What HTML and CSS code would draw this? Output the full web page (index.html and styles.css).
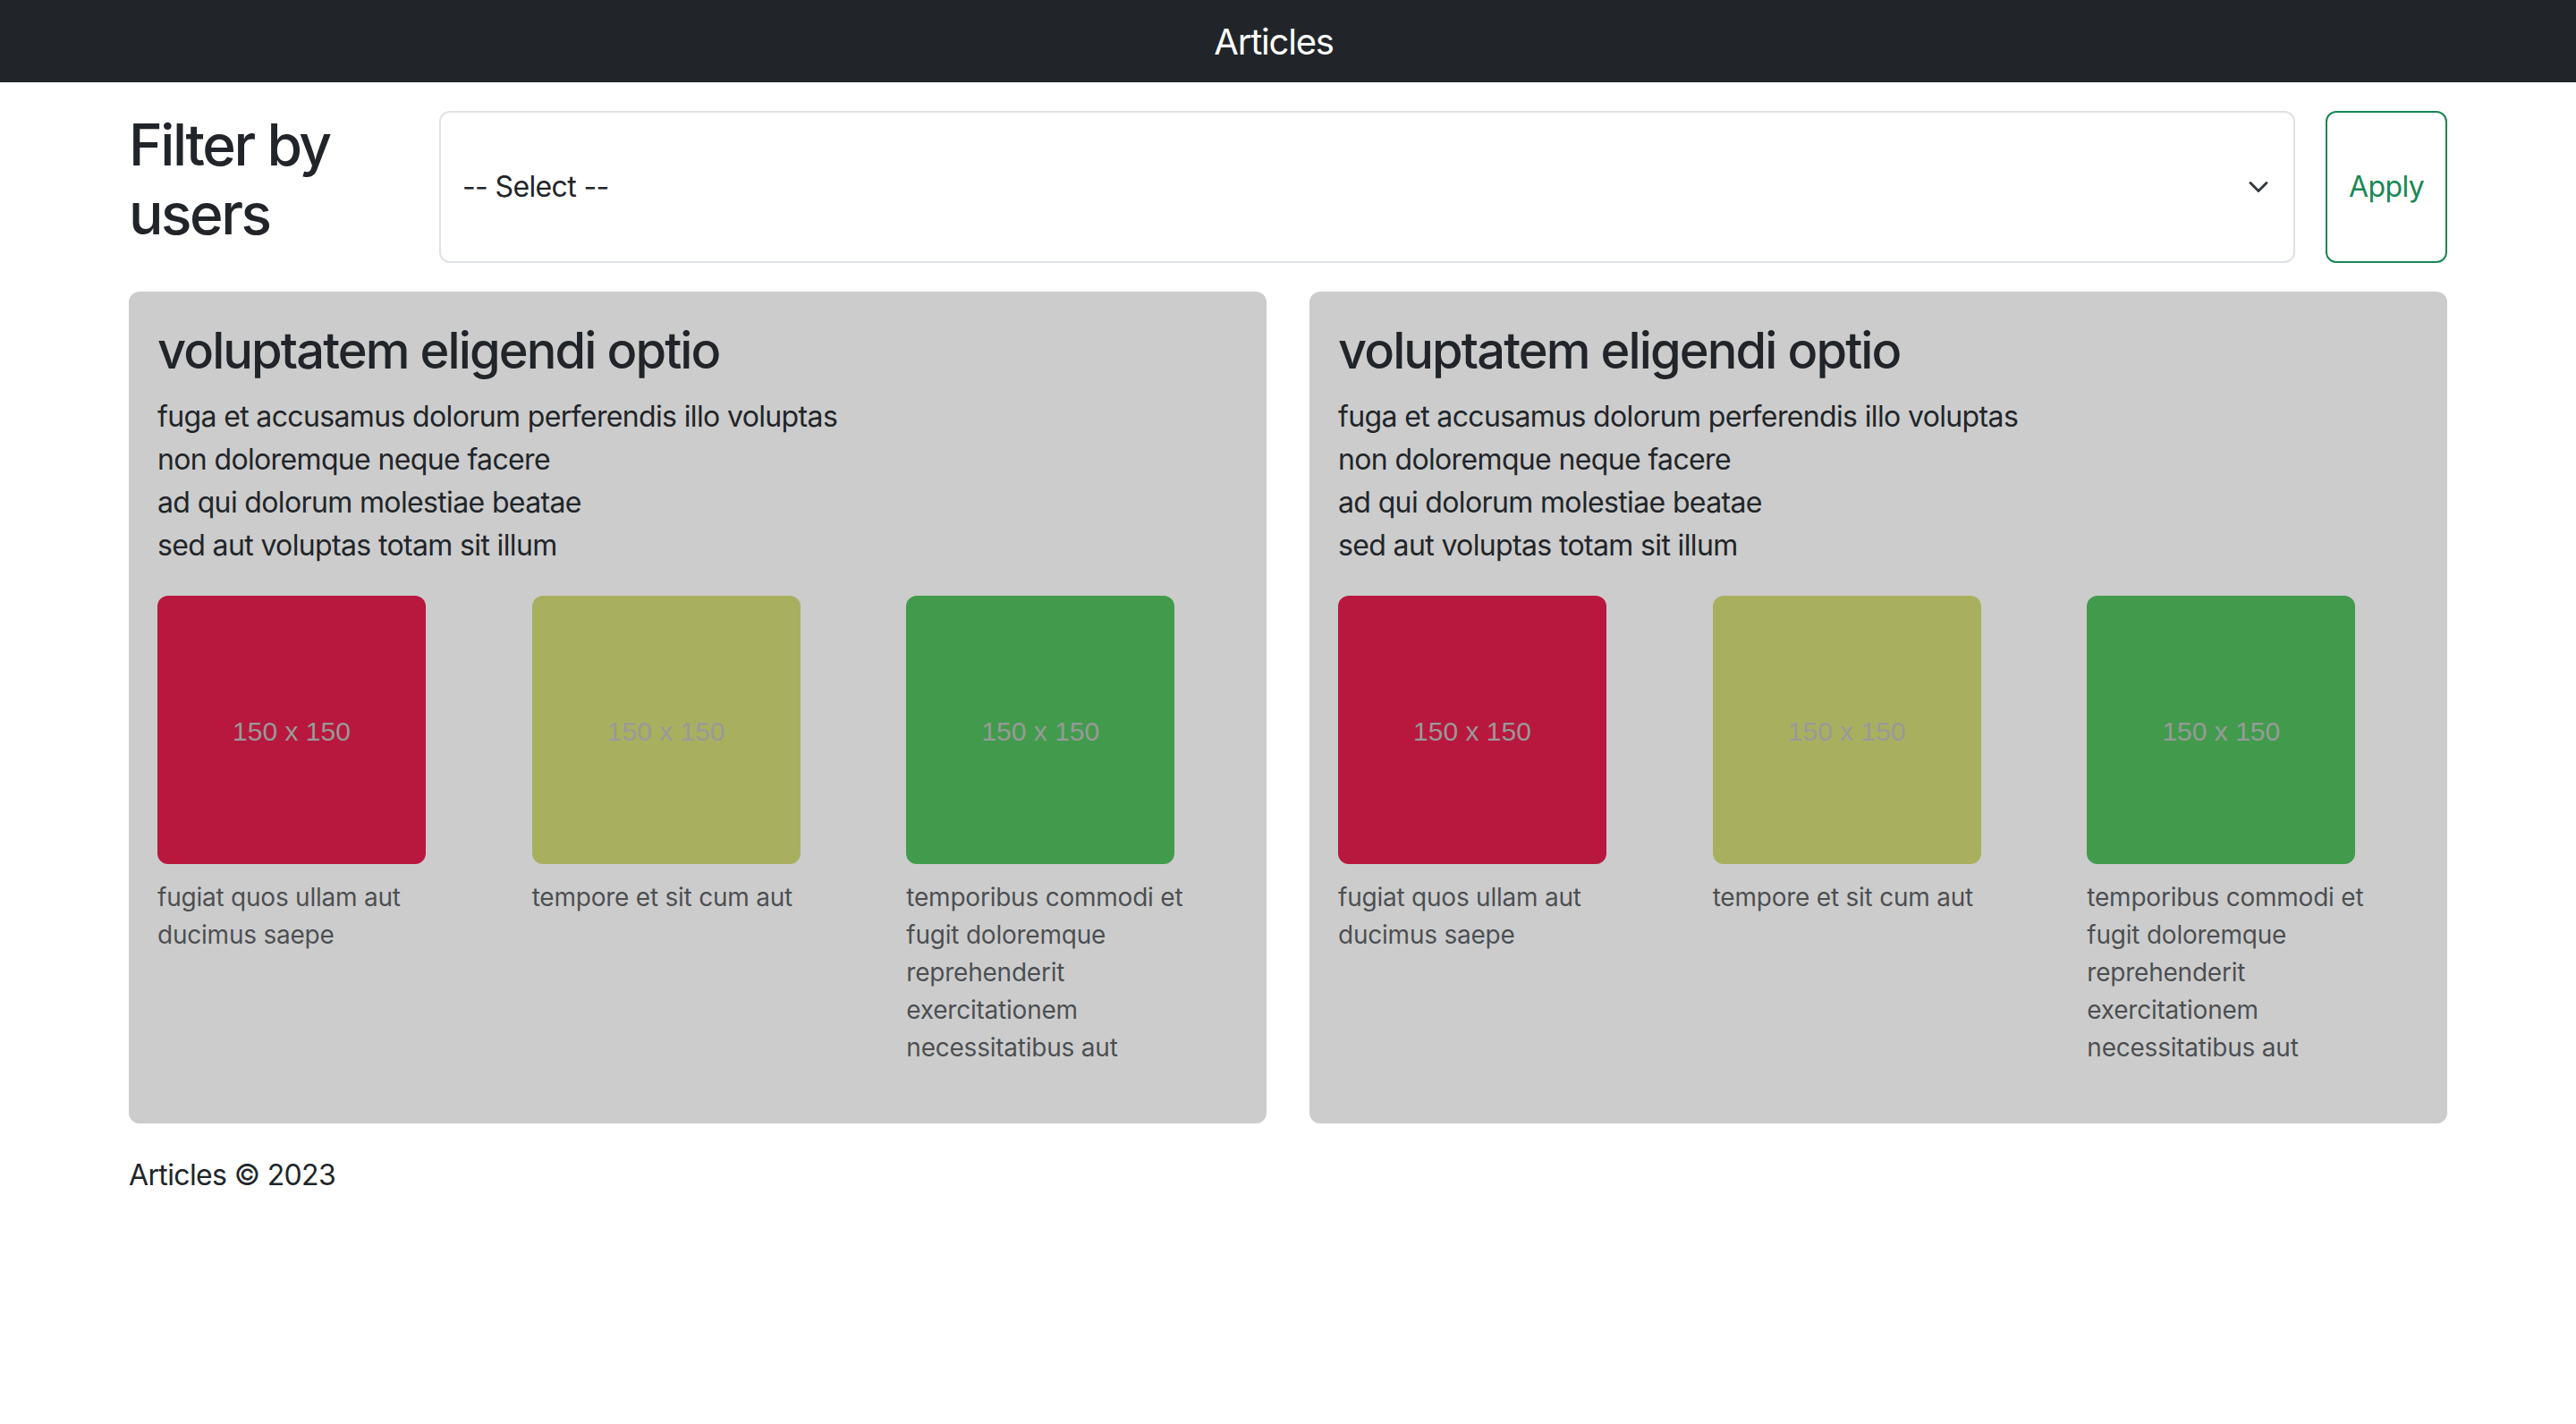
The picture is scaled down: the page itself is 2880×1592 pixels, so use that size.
FILE: index.html
```html
<!DOCTYPE html>
<html lang="en">
<head>
<meta charset="utf-8">
<title>Articles</title>
<link rel="stylesheet" href="styles.css">
</head>
<body>
<header class="navbar">
  <span class="brand">Articles</span>
</header>
<main class="container">
  <form class="filter">
    <h2 class="filter-title">Filter by users</h2>
    <div class="select-box">
      <span class="select-text">-- Select --</span>
      <svg class="chevron" viewBox="0 0 16 16" width="24" height="24" aria-hidden="true"><path d="m2 5 6 6 6-6" fill="none" stroke="#343a40" stroke-width="2" stroke-linecap="round" stroke-linejoin="round"/></svg>
    </div>
    <button type="button" class="apply">Apply</button>
  </form>

  <div class="cards">
    <article class="card">
      <h3 class="card-title">voluptatem eligendi optio</h3>
      <p class="card-body">fuga et accusamus dolorum perferendis illo voluptas
non doloremque neque facere
ad qui dolorum molestiae beatae
sed aut voluptas totam sit illum</p>
      <div class="photos">
        <figure class="photo">
          <div class="thumb thumb-red">150 x 150</div>
          <figcaption class="caption">fugiat quos ullam aut ducimus saepe</figcaption>
        </figure>
        <figure class="photo">
          <div class="thumb thumb-olive">150 x 150</div>
          <figcaption class="caption">tempore et sit cum aut</figcaption>
        </figure>
        <figure class="photo">
          <div class="thumb thumb-green">150 x 150</div>
          <figcaption class="caption">temporibus commodi et fugit doloremque reprehenderit exercitationem necessitatibus aut</figcaption>
        </figure>
      </div>
    </article>
    <article class="card">
      <h3 class="card-title">voluptatem eligendi optio</h3>
      <p class="card-body">fuga et accusamus dolorum perferendis illo voluptas
non doloremque neque facere
ad qui dolorum molestiae beatae
sed aut voluptas totam sit illum</p>
      <div class="photos">
        <figure class="photo">
          <div class="thumb thumb-red">150 x 150</div>
          <figcaption class="caption">fugiat quos ullam aut ducimus saepe</figcaption>
        </figure>
        <figure class="photo">
          <div class="thumb thumb-olive">150 x 150</div>
          <figcaption class="caption">tempore et sit cum aut</figcaption>
        </figure>
        <figure class="photo">
          <div class="thumb thumb-green">150 x 150</div>
          <figcaption class="caption">temporibus commodi et fugit doloremque reprehenderit exercitationem necessitatibus aut</figcaption>
        </figure>
      </div>
    </article>
  </div>

  <footer class="footer">Articles © 2023</footer>
</main>
</body>
</html>
```

FILE: styles.css
```css
* { box-sizing: border-box; }

body {
  margin: 0;
  background: #fff;
  color: #212529;
  font-family: Inter, "Noto Sans", "Liberation Sans", sans-serif;
  font-size: 32px;
  line-height: 1.5;
  letter-spacing: -0.02em;
}

.navbar {
  height: 92px;
  background: #212529;
  display: flex;
  align-items: center;
  justify-content: center;
}

.brand {
  color: #fff;
  font-size: 40px;
  line-height: 60px;
  letter-spacing: -0.03em;
  padding-top: 2px;
  margin-right: 32px;
}

.container {
  width: 2592px;
  margin: 0 auto;
  padding-top: 32px;
}

.filter {
  display: grid;
  grid-template-columns: 323px 1fr auto;
  column-gap: 24px;
  margin: 0;
}

.filter-title {
  margin: 0 0 16px;
  font-size: 64px;
  font-weight: 500;
  line-height: 1.2;
  letter-spacing: -0.038em;
}

.select-box {
  display: flex;
  align-items: center;
  justify-content: space-between;
  border: 2px solid #dee2e6;
  border-radius: 12px;
  padding: 0 27px 0 24px;
  background: #fff;
}

.chevron {
  width: 24px;
  height: 24px;
}

.apply {
  margin-left: 10px;
  border: 2px solid #198754;
  border-radius: 12px;
  background: transparent;
  color: #198754;
  font-family: inherit;
  font-size: 32px;
  line-height: 1.5;
  letter-spacing: -0.02em;
  padding: 0 24px;
}

.cards {
  display: grid;
  grid-template-columns: 1fr 1fr;
  column-gap: 48px;
  margin-top: 32px;
}

.card {
  background: #cccccc;
  border-radius: 12px;
  padding: 32px;
}

.card-title {
  margin: 0 0 16px;
  font-size: 56px;
  font-weight: 500;
  line-height: 1.2;
  letter-spacing: -0.034em;
  padding-top: 1px;
}

.card-body {
  margin: 0 0 32px;
  white-space: pre-line;
}

.photos {
  display: grid;
  grid-template-columns: repeat(3, 1fr);
  column-gap: 48px;
}

.photo {
  margin: 0 0 32px;
}

.thumb {
  width: 300px;
  height: 300px;
  border-radius: 12px;
  margin-bottom: 16px;
  display: flex;
  align-items: center;
  justify-content: center;
  color: #999999;
  font-family: "Liberation Sans", Arial, sans-serif;
  font-size: 30px;
  letter-spacing: 0;
  padding-top: 4px;
}

.thumb-red { background: #b8183d; }
.thumb-olive { background: #a8b060; }
.thumb-green { background: #429b4c; }

.caption {
  font-size: 28px;
  line-height: 1.5;
  letter-spacing: -0.008em;
  color: rgba(33, 37, 41, 0.75);
}

.footer {
  margin-top: 34px;
}
```
